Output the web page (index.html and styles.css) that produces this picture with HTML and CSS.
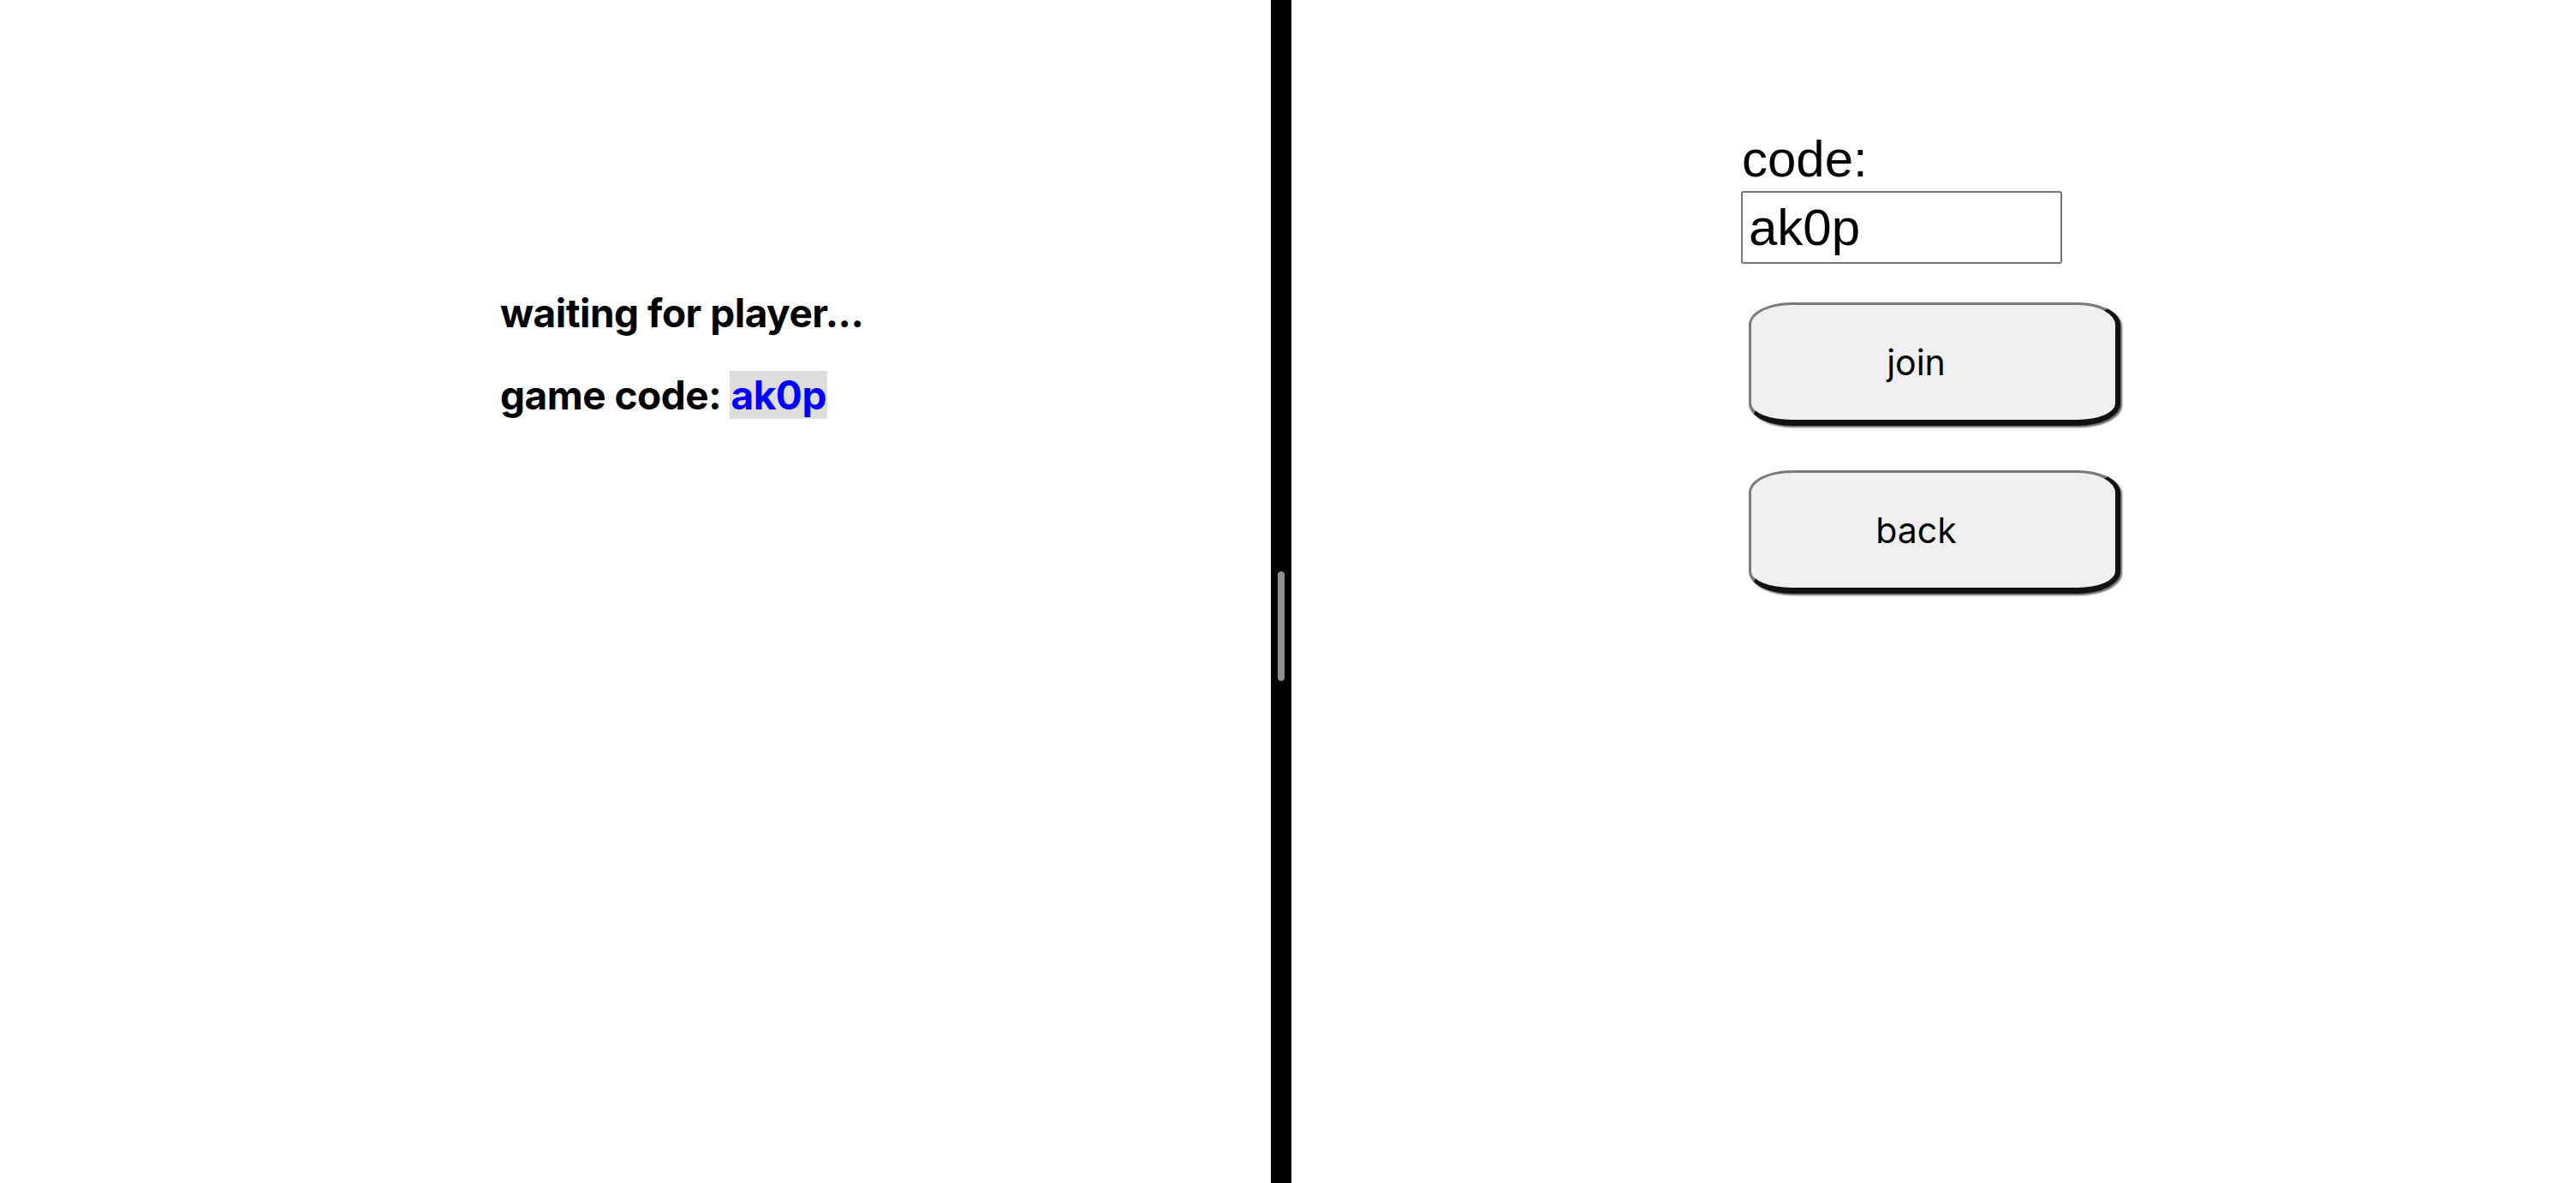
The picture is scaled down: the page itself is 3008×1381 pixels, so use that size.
FILE: index.html
```html
<!DOCTYPE html>
<html>
<head>
<meta charset="utf-8">
<link rel="stylesheet" href="styles.css">
</head>
<body>
<div class="split">
  <section class="pane pane-left">
    <div class="status">
      <p class="status-line">waiting for player...</p>
      <p class="status-line">game code: <span class="code">ak0p</span></p>
    </div>
  </section>
  <div class="divider"><div class="handle"></div></div>
  <section class="pane pane-right">
    <div class="join-form">
      <label class="code-label" for="code">code:</label>
      <input id="code" class="code-input" type="text" value="ak0p">
      <button class="btn btn-join">join</button>
      <button class="btn btn-back">back</button>
    </div>
  </section>
</div>
</body>
</html>
```

FILE: styles.css
```css
html, body {
  margin: 0;
  padding: 0;
  height: 100%;
  background: #fff;
}
.split {
  display: flex;
  height: 1381px;
  width: 3008px;
}
.pane {
  background: #fff;
}
.pane-left {
  width: 1484px;
  flex: none;
}
.divider {
  width: 24px;
  flex: none;
  background: #000;
  display: flex;
  align-items: flex-start;
  justify-content: center;
}
.handle {
  margin-top: 667px;
  width: 8px;
  height: 128px;
  border-radius: 4px;
  background: #8e8e8e;
}
.pane-right {
  flex: 1;
}
.status {
  padding: 336px 0 0 584px;
  display: flex;
  flex-direction: column;
  gap: 38px;
  font-family: Inter, "Noto Sans", sans-serif;
  font-weight: 700;
  font-size: 46px;
  color: #000;
}
.status-line {
  margin: 0;
  line-height: 58px;
  letter-spacing: -0.5px;
}
.code {
  color: #0000ff;
  background: #dddddd;
  padding: 0 1px;
}
.join-form {
  padding: 150px 0 0 525px;
  display: flex;
  flex-direction: column;
  align-items: flex-start;
}
.code-label {
  font-family: "Liberation Sans", Arial, sans-serif;
  font-size: 60px;
  line-height: 72px;
  color: #000;
  margin-left: 1px;
}
.code-input {
  box-sizing: border-box;
  width: 375px;
  height: 85px;
  margin: 1px 0 0 0;
  padding: 0 7px;
  border: 2px solid #767676;
  border-radius: 3px;
  font-family: "Liberation Sans", Arial, sans-serif;
  font-size: 60px;
  color: #000;
  background: #fff;
  outline: none;
}
.btn {
  box-sizing: border-box;
  width: 434px;
  height: 144px;
  margin-left: 9px;
  padding: 0 40px 0 0;
  background: #efefef;
  border-style: solid;
  border-width: 3px 6px 7px 3px;
  border-color: #7a7a7a #111 #111 #7a7a7a;
  border-radius: 50px / 26px;
  box-shadow: 2px 2px 2px rgba(0,0,0,0.6);
  font-family: Inter, "Noto Sans", sans-serif;
  font-size: 41px;
  color: #000;
  cursor: pointer;
}
.btn-join {
  margin-top: 45px;
}
.btn-back {
  margin-top: 52px;
}
```
